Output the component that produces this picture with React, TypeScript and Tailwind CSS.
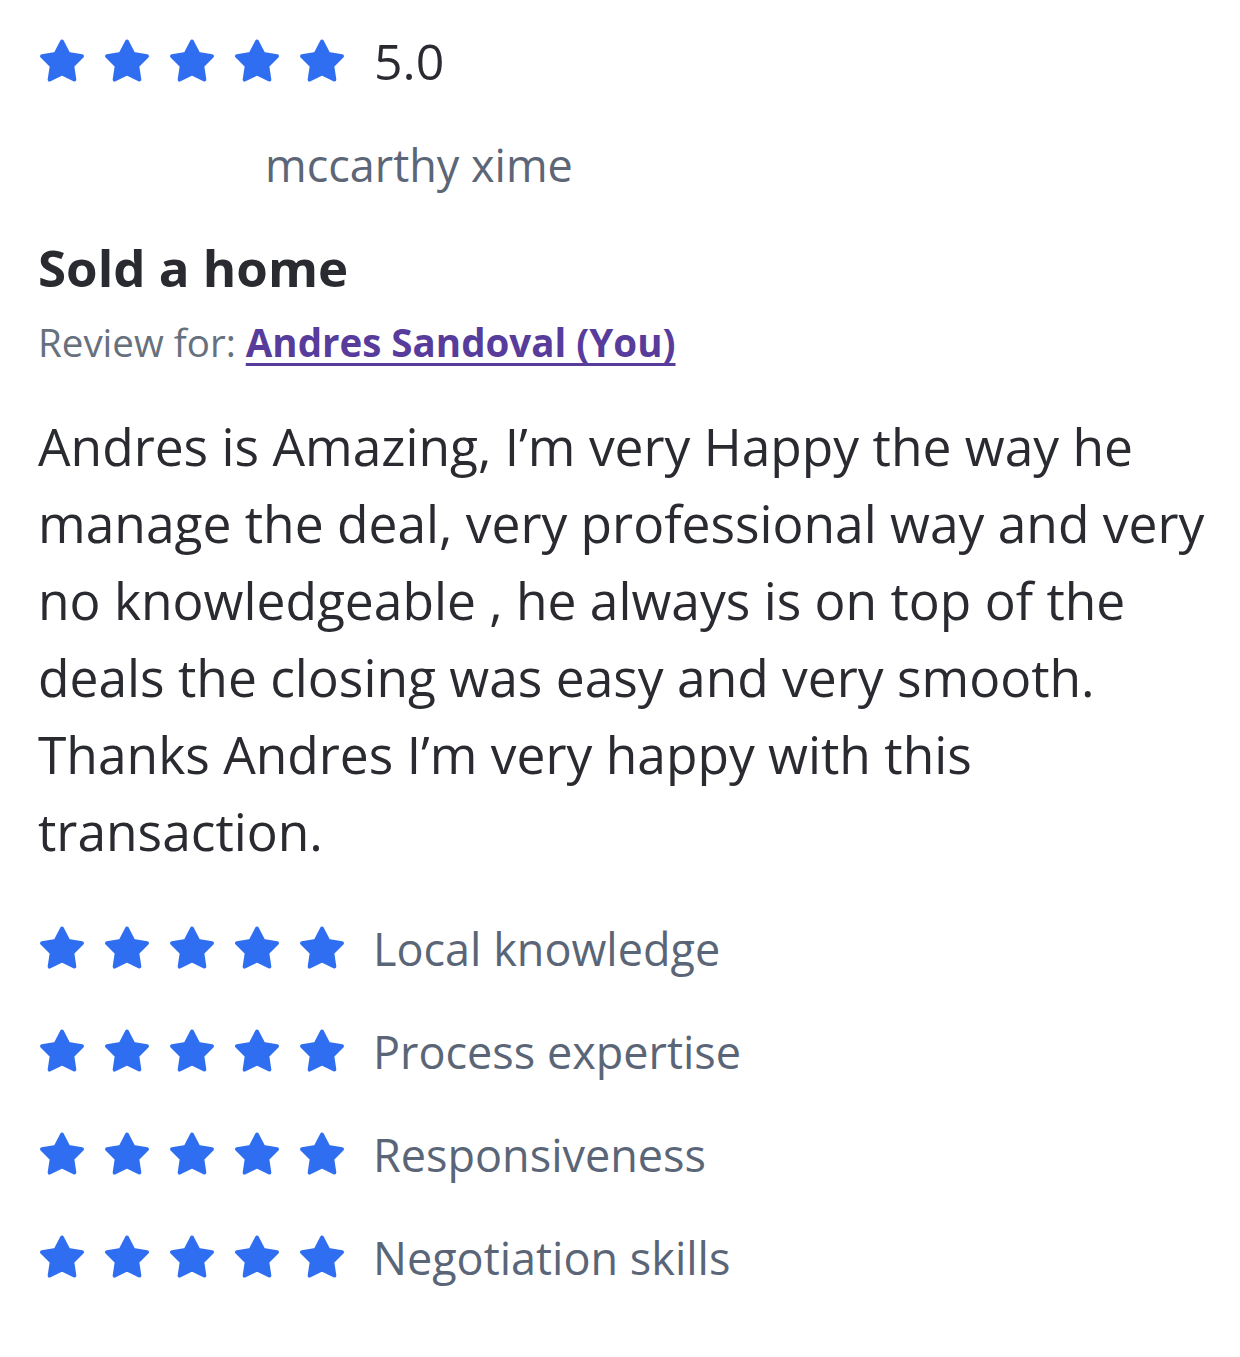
import React from 'react';

// Estrella rellena con puntas redondeadas
const StarIcon = () => (
  <svg viewBox="0 0 24 24" className="w-[48px] h-[48px] shrink-0 text-[#2f6ef0]">
    <polygon
      points="12,2.3 15.174,8.431 21.99,9.555 17.136,14.469 18.17,21.29 12,18.2 5.83,21.29 6.864,14.469 2.01,9.555 8.826,8.431"
      fill="currentColor"
      stroke="currentColor"
      strokeWidth={2}
      strokeLinejoin="round"
    />
  </svg>
);

const Stars = () => (
  <div className="flex items-center gap-[17px]">
    {[0, 1, 2, 3, 4].map((i) => (
      <StarIcon key={i} />
    ))}
  </div>
);

const categories = ['Local knowledge', 'Process expertise', 'Responsiveness', 'Negotiation skills'];

const App = () => {
  return (
    <div
      className="min-h-[1357px] bg-white pl-[38px] pt-[37px] text-[#2a2b31]"
      style={{ fontFamily: '"Open Sans", "Noto Sans", sans-serif' }}
    >
      {/* Puntuación general */}
      <div className="flex items-center h-[48px]">
        <Stars />
        <span className="ml-[28px] text-[50px] leading-none">5.0</span>
      </div>

      {/* Autor */}
      <div className="mt-[49px] flex items-center h-[60px]">
        <div className="w-[227px] h-[60px] shrink-0" />
        <span className="text-[45px] leading-none text-[#5c6676]">mccarthy xime</span>
      </div>

      {/* Título */}
      <h2 className="mt-[41px] text-[51px] font-bold leading-[64px]">Sold a home</h2>

      <p className="mt-[18px] text-[38.5px] leading-[50px] text-[#67707d]">
        Review for:{' '}
        <a href="#" className="font-bold text-[#573c9c] underline underline-offset-[6px] decoration-[3px]">
          Andres Sandoval (You)
        </a>
      </p>

      {/* Texto de la reseña */}
      <p className="mt-[41px] w-[1182px] text-[51.5px] leading-[77px]">
        Andres is Amazing, I’m very Happy the way he manage the deal, very professional way and very no
        knowledgeable , he always is on top of the deals the closing was easy and very smooth. Thanks Andres
        I’m very happy with this transaction.
      </p>

      {/* Puntuación por categoría */}
      <div className="mt-[54px] flex flex-col gap-[55px]">
        {categories.map((c) => (
          <div key={c} className="flex items-center h-[48px]">
            <Stars />
            <span className="ml-[27px] text-[45px] leading-none text-[#5a6677]">{c}</span>
          </div>
        ))}
      </div>
    </div>
  );
};

export default App;
